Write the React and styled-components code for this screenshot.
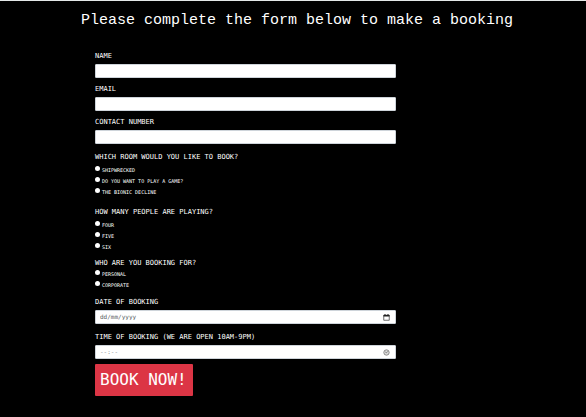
import React from "react";
import styled, { createGlobalStyle } from "styled-components";

const mono = '"DejaVu Sans Mono", "Liberation Mono", monospace';

const GlobalStyle = createGlobalStyle`
  * { box-sizing: border-box; }
  html { background: #000; }
  body { margin: 0; color: #fff; font-family: ${mono}; }
`;

const Page = styled.main`
  min-height: 100vh;
  border-top: 1px solid #e4e8e8;
  background: #000;
`;

const Title = styled.h1`
  margin: 0;
  padding: 10px 0 0 8px;
  font: 400 15px/20px "Liberation Mono", "Courier New", monospace;
  text-align: center;
`;

const Form = styled.form`
  display: flex;
  flex-direction: column;
  align-items: stretch;
  padding: 21px 190px 20px 95px;
`;

const Field = styled.div`
  display: flex;
  flex-direction: column;
  gap: 4px;
  margin-bottom: ${(p) => p.$bottom}px;
`;

const Label = styled.label`
  font-size: 7px;
  line-height: 8px;
  white-space: nowrap;
`;

const Control = styled.div`
  display: flex;
  align-items: center;
  height: 14px;
  padding: 0 5px 0 4px;
  border: 1px solid #ced4da;
  border-radius: 1px;
  background: #fff;
`;

const TextInput = styled.input`
  flex: 1;
  min-width: 0;
  height: 12px;
  padding: 0;
  border: 0;
  outline: 0;
  background: transparent;
  color: #212529;
  font: 6px/12px ${mono};

  &::placeholder {
    color: ${(p) => (p.$faint ? "#8b8f94" : "#565b61")};
    opacity: 1;
  }
`;

const Group = styled.fieldset`
  min-width: 0;
  margin: ${(p) => p.$top}px 0 ${(p) => p.$bottom}px;
  padding: 0;
  border: 0;
`;

const Legend = styled.legend`
  padding: 0 0 ${(p) => p.$gap}px;
  font-size: 7px;
  line-height: 8px;
  white-space: nowrap;
`;

const Option = styled.label`
  display: flex;
  align-items: flex-start;
  gap: 2px;
  height: 11px;
  font-size: 5px;
  line-height: 11px;
  white-space: nowrap;
`;

const Radio = styled.input`
  appearance: none;
  width: 5px;
  height: 5px;
  margin: 1px 0 0;
  border-radius: 50%;
  background: #fff;

  &:checked {
    border: 1px solid #fff;
    background: #0d6efd;
  }
`;

const Submit = styled.button`
  align-self: flex-start;
  height: 32px;
  padding: 0 6px 0 5px;
  border: 0;
  border-radius: 1px;
  background: #dc3545;
  color: #fff;
  font: 16px/32px ${mono};
  cursor: pointer;
`;

const CalendarIcon = () => (
  <svg width="7" height="7" viewBox="0 0 14 14" aria-hidden="true">
    <path d="M1.5 2.5h11v10h-11z" fill="none" stroke="#333" strokeWidth="1.4" />
    <path d="M1 2h12v3H1zM3 0h2v3H3zM9 0h2v3H9z" fill="#222" />
  </svg>
);

const ClockIcon = () => (
  <svg width="7" height="7" viewBox="0 0 14 14" aria-hidden="true">
    <circle cx="7" cy="7" r="5.4" fill="#ddd" stroke="#777" strokeWidth="1.6" />
    <path d="M7 7.5L4.5 6M7 7.5l3-3" fill="none" stroke="#666" strokeWidth="1.6" />
  </svg>
);

const TextField = ({ id, label, type = "text", placeholder, faint, icon, bottom = 7 }) => (
  <Field $bottom={bottom}>
    <Label htmlFor={id}>{label}</Label>
    <Control>
      <TextInput id={id} name={id} type={type} placeholder={placeholder} $faint={faint} />
      {icon}
    </Control>
  </Field>
);

const RadioGroup = ({ name, legend, options, top = 0, bottom, gap }) => (
  <Group $top={top} $bottom={bottom}>
    <Legend $gap={gap}>{legend}</Legend>
    {options.map((option) => (
      <Option key={option}>
        <Radio type="radio" name={name} value={option} />
        {option}
      </Option>
    ))}
  </Group>
);

export default function App() {
  return (
    <>
      <GlobalStyle />
      <Page>
        <Title>Please complete the form below to make a booking</Title>
        <Form onSubmit={(e) => e.preventDefault()}>
          <TextField id="name" label="NAME" />
          <TextField id="email" label="EMAIL" type="email" />
          <TextField id="phone" label="CONTACT NUMBER" type="tel" />
          <RadioGroup
            name="room"
            legend="WHICH ROOM WOULD YOU LIKE TO BOOK?"
            options={["SHIPWRECKED", "DO YOU WANT TO PLAY A GAME?", "THE BIONIC DECLINE"]}
            top={2}
            gap={4}
            bottom={10}
          />
          <RadioGroup
            name="players"
            legend="HOW MANY PEOPLE ARE PLAYING?"
            options={["FOUR", "FIVE", "SIX"]}
            gap={4}
            bottom={6}
          />
          <RadioGroup
            name="occasion"
            legend="WHO ARE YOU BOOKING FOR?"
            options={["PERSONAL", "CORPORATE"]}
            gap={2}
            bottom={7}
          />
          <TextField
            id="date"
            label="DATE OF BOOKING"
            placeholder="dd/mm/yyyy"
            icon={<CalendarIcon />}
            bottom={9}
          />
          <TextField
            id="time"
            label="TIME OF BOOKING (WE ARE OPEN 10AM-9PM)"
            placeholder="--:--"
            faint
            icon={<ClockIcon />}
            bottom={5}
          />
          <Submit type="submit">BOOK NOW!</Submit>
        </Form>
      </Page>
    </>
  );
}
